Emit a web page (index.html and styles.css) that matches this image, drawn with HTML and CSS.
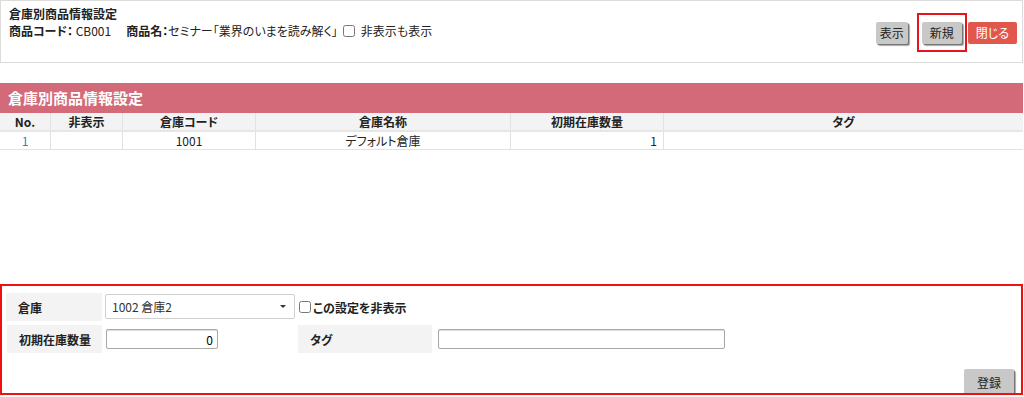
FILE: index.html
```html
<!DOCTYPE html>
<html lang="ja">
<head>
  <meta charset="UTF-8">
  <meta name="viewport" content="width=device-width, initial-scale=1.0">
  <title>倉庫別商品情報設定</title>
  <link rel="stylesheet" href="styles.css">
</head>
<body>
  <div class="top-panel">
    <div class="info">
      <div class="title">倉庫別商品情報設定</div>
      <div class="meta">
        <span class="item"><b>商品コード：</b> CB001</span>
        <span class="item"><b>商品名：</b>セミナー「業界のいまを読み解く」</span>
        <label class="check"><input type="checkbox"><span>非表示も表示</span></label>
      </div>
    </div>
    <div class="buttons">
      <button class="btn btn-show">表示</button>
      <span class="mark"><button class="btn btn-new">新規</button></span>
      <button class="btn btn-red">閉じる</button>
    </div>
  </div>

  <div class="section">
    <div class="section-header">倉庫別商品情報設定</div>
    <table class="list">
      <thead>
        <tr>
          <th class="c-no">No.</th>
          <th class="c-hide">非表示</th>
          <th class="c-code">倉庫コード</th>
          <th class="c-name">倉庫名称</th>
          <th class="c-qty">初期在庫数量</th>
          <th>タグ</th>
        </tr>
      </thead>
      <tbody>
        <tr>
          <td class="link">1</td>
          <td></td>
          <td>1001</td>
          <td>デフォルト倉庫</td>
          <td class="num">1</td>
          <td></td>
        </tr>
      </tbody>
    </table>
  </div>

  <form class="edit-form" onsubmit="return false;">
    <div class="form-grid">
      <div class="label">倉庫</div>
      <div class="select">
        <span>1002 倉庫2</span>
        <span class="caret"></span>
      </div>
      <label class="check bold"><input type="checkbox"><span>この設定を非表示</span></label>

      <div class="label">初期在庫数量</div>
      <div class="field"><input type="text" class="input short num" value="0"></div>
      <div class="label">タグ</div>
      <div class="field"><input type="text" class="input wide"></div>
    </div>
    <div class="form-actions">
      <button type="submit" class="btn">登録</button>
    </div>
  </form>
</body>
</html>
```

FILE: styles.css
```css
body {
  margin: 0;
  padding: 0;
  font-family: "Noto Sans CJK JP", "Noto Sans", sans-serif;
  font-size: 12px;
  font-feature-settings: "palt";
  color: #222;
  background: #fff;
}

b {
  font-weight: bold;
}

.top-panel {
  box-sizing: border-box;
  width: 1023px;
  height: 63px;
  border: 1px solid #dcdcdc;
  padding: 5px 5px 0 8px;
  display: flex;
  justify-content: space-between;
}

.title {
  font-weight: bold;
  line-height: 15px;
}

.meta {
  display: flex;
  align-items: center;
  line-height: 18px;
  margin-top: 1px;
}

.meta .item {
  margin-right: 15px;
  white-space: pre;
}

.meta .item:nth-child(2) {
  margin-right: 5px;
}

.check {
  display: flex;
  align-items: center;
  cursor: pointer;
}

.check input {
  margin: 0 6px 0 0;
  width: 12px;
  height: 12px;
}

.check.bold {
  font-weight: bold;
}

.check.bold input {
  margin-right: 2px;
}

.buttons {
  display: flex;
  align-items: center;
  margin-top: -3px;
}

.btn {
  font-family: inherit;
  font-size: 12px;
  font-feature-settings: "palt";
  height: 22px;
  padding: 0 6px;
  background: #c8c8c8;
  color: #222;
  border: none;
  border-radius: 2px;
  box-shadow: 1px 1px 0 #777, 2px 2px 1px #aaa;
  cursor: pointer;
}

.btn-show {
  padding: 0 4px;
  margin-right: 9px;
}

.btn-new {
  padding: 0 8px;
}

.btn-red {
  background: #e2574c;
  color: #fff;
  box-shadow: none;
  padding: 0 8px;
}

.mark {
  display: inline-flex;
  align-items: center;
  box-sizing: border-box;
  height: 39px;
  padding: 0 3px;
  border: 2px solid #e8141c;
  margin-right: 1px;
}

.section {
  margin-top: 20px;
  width: 1023px;
}

.section-header {
  height: 30px;
  line-height: 30px;
  background: #d36a79;
  color: #fff;
  font-size: 15px;
  font-weight: bold;
  padding-left: 8px;
}

.list {
  width: 100%;
  border-collapse: collapse;
  table-layout: fixed;
}

.list th,
.list td {
  border-left: 1px solid #e2e2e2;
  border-bottom: 1px solid #e2e2e2;
  text-align: center;
  padding: 0 6px;
  line-height: 17px;
  white-space: nowrap;
}

.list th:first-child,
.list td:first-child {
  border-left: none;
}

.list th {
  background: #f3f3f3;
  font-weight: bold;
  border-bottom: 2px solid #e6e6e6;
}

.list td.link {
  color: #1f86cf;
}

.list td.num {
  text-align: right;
}

.c-no { width: 38px; }
.c-hide { width: 59px; }
.c-code { width: 120px; }
.c-name { width: 242px; }
.c-qty { width: 140px; }

.edit-form {
  box-sizing: border-box;
  margin-top: 134px;
  width: 1023px;
  height: 111px;
  border: 2px solid #f01010;
  padding: 7px 4px 0 4px;
  overflow: hidden;
}

.form-grid {
  display: grid;
  grid-template-columns: 96px 190px 134px 290px;
  grid-auto-rows: 28px;
  column-gap: 3px;
  row-gap: 4px;
}

.form-grid .check {
  grid-column: span 2;
  margin-left: 1px;
}

.label {
  background: #f3f3f3;
  font-weight: bold;
  padding-left: 12px;
  display: flex;
  align-items: center;
}

.form-grid .label:nth-of-type(3) {
  margin-left: 1px;
}

.select {
  box-sizing: border-box;
  height: 25px;
  margin-top: 1px;
  border: 1px solid #d0d0d0;
  border-radius: 2px;
  padding: 0 8px 0 6px;
  display: flex;
  align-items: center;
  justify-content: space-between;
  color: #333;
}

.caret {
  width: 0;
  height: 0;
  border-left: 3px solid transparent;
  border-right: 3px solid transparent;
  border-top: 3px solid #333;
}

.field {
  display: flex;
  align-items: center;
}

.input {
  box-sizing: border-box;
  height: 20px;
  border: 1px solid #a8a8a8;
  border-radius: 2px;
  box-shadow: inset 0 1px 1px #ddd;
  font-family: inherit;
  font-size: 12px;
  padding: 0 4px;
  margin: 0 0 0 1px;
}

.input.short {
  width: 112px;
}

.input.wide {
  width: 288px;
  margin-left: 3px;
}

.input.num {
  text-align: right;
}

.form-actions {
  display: flex;
  justify-content: flex-end;
  margin-top: 16px;
  padding-right: 3px;
}

.form-actions .btn {
  height: 26px;
  padding: 0 13px;
}
```
